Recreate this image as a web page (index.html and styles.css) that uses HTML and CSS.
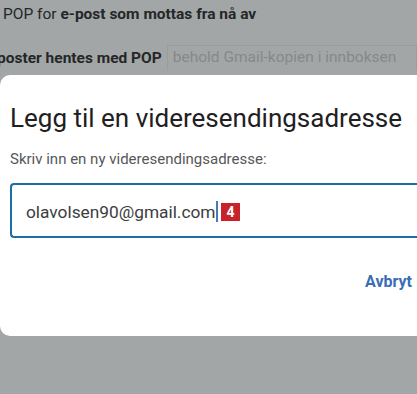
FILE: index.html
```html
<!DOCTYPE html>
<html lang="no">
<head>
<meta charset="utf-8">
<link rel="stylesheet" href="styles.css">
</head>
<body>
<div class="page">
  <div class="bg">
    <div class="line1">POP for <b>e-post som mottas fra nå av</b></div>
    <div class="line2"><b class="cut">poster hentes med POP</b><span class="select">behold Gmail-kopien i innboksen</span></div>
  </div>
  <div class="dialog">
    <h1 class="title">Legg til en videresendingsadresse</h1>
    <div class="label">Skriv inn en ny videresendingsadresse:</div>
    <div class="input"><span class="value">olavolsen90@gmail.com</span><span class="caret"></span><span class="badge">4</span></div>
    <div class="actions"><span class="btn">Avbryt</span></div>
  </div>
</div>
</body>
</html>
```
FILE: styles.css
```css
html, body {
  margin: 0;
  padding: 0;
  width: 417px;
  height: 394px;
  overflow: hidden;
  background: #a3a6a7;
}
.page {
  font-family: Roboto, "Liberation Sans", sans-serif;
  color: #252627;
}
.bg {
  height: 75px;
  display: flex;
  flex-direction: column;
}
.line1 {
  font-size: 15.5px;
  padding: 5px 0 0 3px;
  height: 22px;
  white-space: nowrap;
}
.line1 b, .line2 b { font-weight: 700; }
.line2 {
  display: flex;
  align-items: center;
  margin-top: 18px;
  font-size: 15.5px;
  white-space: nowrap;
}
.cut {
  margin-left: -3px;
}
.select {
  margin-left: 5px;
  border: 1px solid #9a9d9e;
  border-bottom: none;
  height: 24px;
  line-height: 23px;
  padding: 0 5px;
  color: #868989;
  font-size: 15.5px;
  flex: 1;
  white-space: nowrap;
}
.dialog {
  background: #fff;
  border-radius: 10px 0 0 10px;
  width: 440px;
  height: 261px;
  box-sizing: border-box;
  padding: 28px 0 0 10px;
}
.title {
  margin: 0;
  font-weight: 400;
  font-size: 26px;
  line-height: 30px;
  color: #1f2021;
  white-space: nowrap;
}
.label {
  margin-top: 17px;
  font-size: 15px;
  color: #555859;
  height: 18px;
  white-space: nowrap;
}
.input {
  margin-top: 15px;
  height: 55px;
  box-sizing: border-box;
  border: 2.5px solid #1b6ea6;
  border-right: none;
  border-radius: 4px 0 0 4px;
  display: flex;
  align-items: center;
  padding-left: 14px;
  padding-top: 2px;
  font-size: 17.3px;
  color: #3b3d3e;
}
.caret {
  width: 1.5px;
  height: 21px;
  background: #4a79b8;
  margin-left: 1px;
}
.badge {
  margin-left: 3px;
  background: #c8232b;
  color: #fff;
  font-weight: 700;
  font-size: 14px;
  width: 19px;
  height: 18px;
  line-height: 18px;
  text-align: center;
}
.actions {
  display: flex;
  padding-right: 5px;
  margin-top: 34px;
  justify-content: flex-end;
  width: 417px;
  box-sizing: border-box;
  margin-left: -10px;
}
.btn {
  color: #3a6db5;
  font-weight: 700;
  font-size: 16px;
}
```
